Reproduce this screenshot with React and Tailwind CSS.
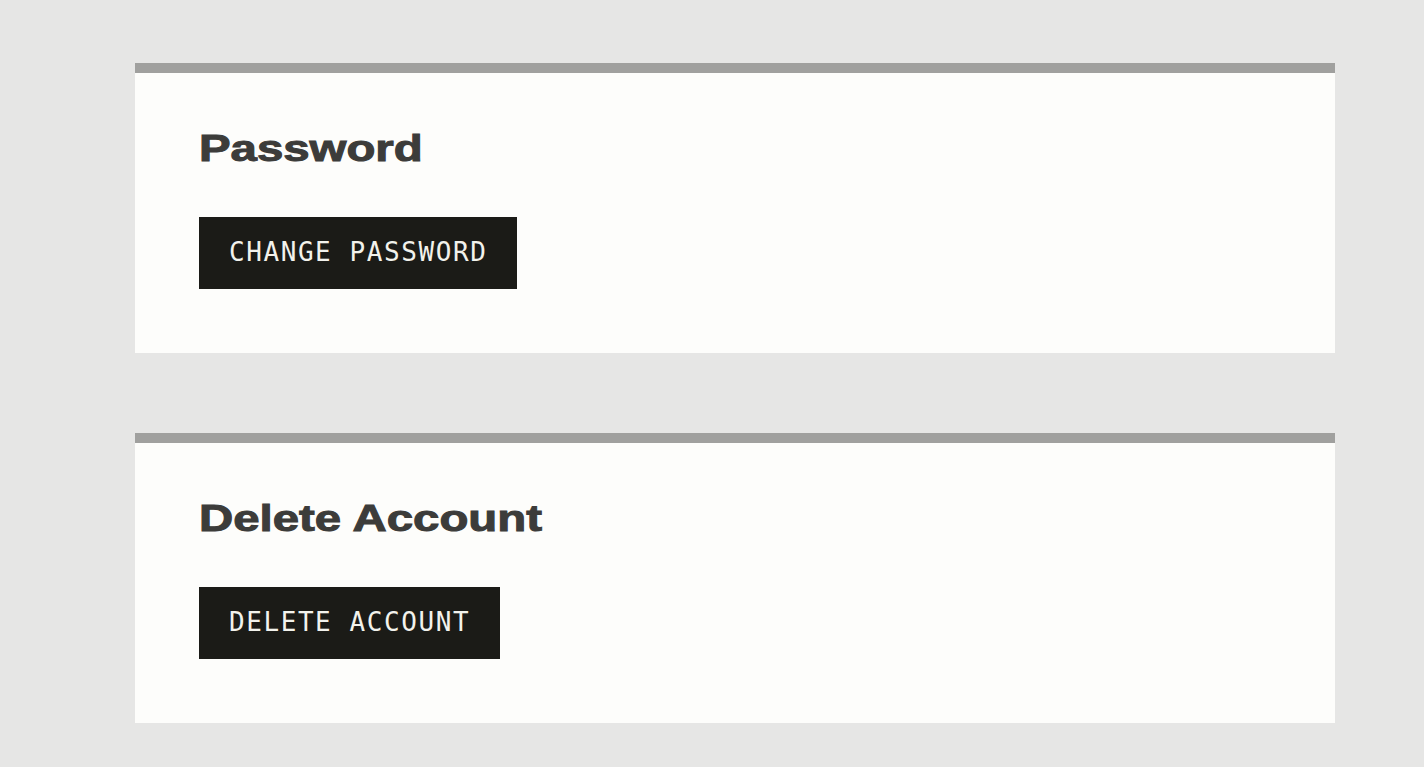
const Section = ({ title, action }) => {
  return (
    <section className="w-[1200px] border-t-[10px] border-[#a0a09e] bg-[#fdfdfb] pl-16 pt-[54px] pb-16">
      <h2 className="h-[43px] text-[37px] leading-[43px] font-bold text-[#3c3c3a] font-['Liberation_Sans',Arial,sans-serif] [-webkit-text-stroke:1px_#3c3c3a]">
        <span className="inline-block origin-left scale-x-[1.28]">{title}</span>
      </h2>
      <button className="mt-[47px] flex h-[72px] items-center bg-[#1b1b17] px-[30px] pb-[2px] text-[26px] leading-[30px] tracking-[1.57px] text-[#f2f2ec] font-['DejaVu_Sans_Mono',monospace]">
        {action}
      </button>
    </section>
  )
}

const App = () => {
  return (
    <div className="min-h-screen bg-[#e6e6e5] pt-[63px] pb-11">
      <div className="flex flex-col gap-20 pl-[135px]">
        <Section title="Password" action="CHANGE PASSWORD" />
        <Section title="Delete Account" action="DELETE ACCOUNT" />
      </div>
    </div>
  )
}

export default App
